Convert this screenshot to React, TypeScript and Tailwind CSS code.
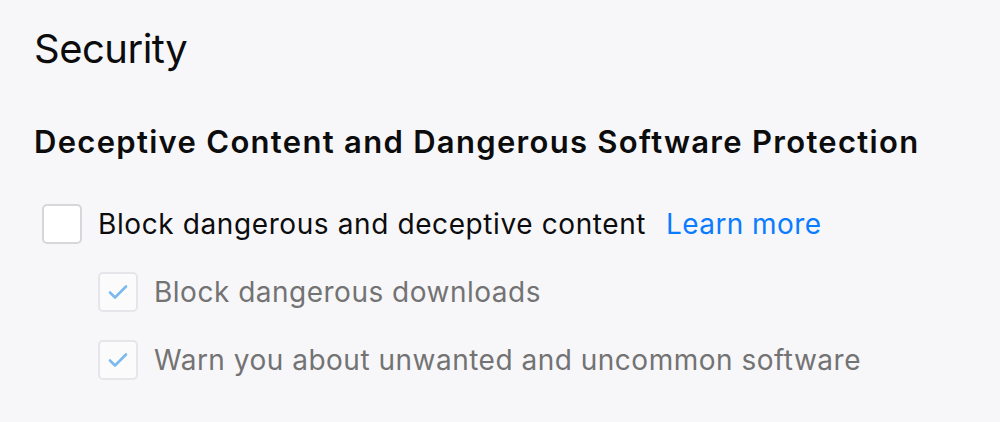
import React from "react";

function Check() {
  return (
    <svg width="20" height="16" viewBox="0 0 20 16" fill="none">
      <path d="M2 8.5 L7 13.5 L18 2.5" stroke="#7cb9ee" strokeWidth="2.6" strokeLinecap="round" strokeLinejoin="round" />
    </svg>
  );
}

export default function App() {
  return (
    <div
      className="w-[1000px] h-[422px] bg-[#f7f7fa] pl-[34px] pt-[24px] text-[#0c0c0d]"
      style={{ fontFamily: 'Inter, "Liberation Sans", Arial, sans-serif' }}
    >
      <h1 className="text-[40px] leading-[50px] m-0 font-normal tracking-[-0.5px]">Security</h1>
      <h2 className="mt-[50px] text-[31px] leading-[36px] font-semibold tracking-[1.3px]">
        Deceptive Content and Dangerous Software Protection
      </h2>
      <div className="mt-[44px] ml-[8px] flex items-center gap-[16px]">
        <div className="w-[40px] h-[40px] rounded-[5px] border-2 border-[#d7d7db] bg-white" />
        <span className="text-[28px] leading-[40px] tracking-[0.6px]">Block dangerous and deceptive content</span>
        <span className="ml-[4px] text-[28px] leading-[40px] tracking-[0.4px] text-[#0a7cff]">Learn more</span>
      </div>
      <div className="ml-[64px] mt-[28px] flex flex-col gap-[28px]">
        <div className="flex items-center gap-[16px]">
          <div className="w-[40px] h-[40px] rounded-[5px] border-2 border-[#e6e6ea] bg-[#fbfbfc] flex items-center justify-center">
            <Check />
          </div>
          <span className="text-[28px] leading-[40px] tracking-[0.5px] text-[#737373]">Block dangerous downloads</span>
        </div>
        <div className="flex items-center gap-[16px]">
          <div className="w-[40px] h-[40px] rounded-[5px] border-2 border-[#e6e6ea] bg-[#fbfbfc] flex items-center justify-center">
            <Check />
          </div>
          <span className="text-[28px] leading-[40px] tracking-[0.5px] text-[#737373]">Warn you about unwanted and uncommon software</span>
        </div>
      </div>
    </div>
  );
}
